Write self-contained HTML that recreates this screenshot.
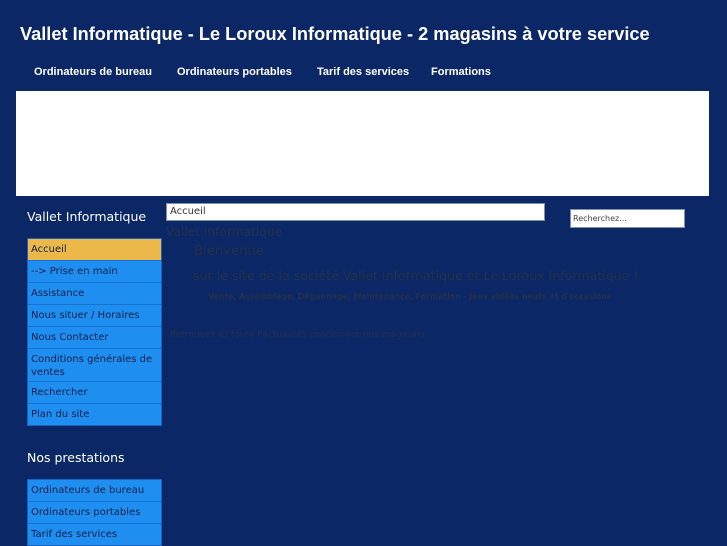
<!DOCTYPE html>
<html><head><meta charset="utf-8"><style>
body{margin:0;width:727px;height:545px;overflow:hidden;background:#0b2766;font-family:"DejaVu Sans",sans-serif;position:relative}
.a{position:absolute}
h1{position:absolute;left:20px;top:24px;margin:0;font:bold 18.2px "Liberation Sans",sans-serif;color:#fff}
.nav{top:66px;font:bold 11px "Liberation Sans",sans-serif;color:#fff}
.ban{left:16px;top:91px;width:693px;height:105px;background:#fff}
.st{color:#fff;font-size:12.5px}
ul{position:absolute;left:27px;width:133px;margin:0;padding:0;list-style:none;border:1px solid #1a60c0;background:#1e8ff0}
li{font-size:10px;color:#10204a;padding:4px 3px 0;height:17px;border-top:1px solid #1672d4;line-height:13px}
li:first-child{border-top:0}
.dk{color:#26304a}
</style></head><body>
<h1>Vallet Informatique - Le Loroux Informatique - 2 magasins à votre service</h1>
<div class="a nav" style="left:34px">Ordinateurs de bureau</div>
<div class="a nav" style="left:177px">Ordinateurs portables</div>
<div class="a nav" style="left:317px">Tarif des services</div>
<div class="a nav" style="left:431px">Formations</div>
<div class="a ban"></div>
<div class="a st" style="left:27px;top:209px">Vallet Informatique</div>
<ul style="top:238px">
<li style="background:#ecb84a">Accueil</li>
<li>--&gt; Prise en main</li>
<li>Assistance</li>
<li>Nous situer / Horaires</li>
<li>Nous Contacter</li>
<li style="height:28px">Conditions générales de ventes</li>
<li>Rechercher</li>
<li>Plan du site</li>
</ul>
<div class="a st" style="left:27px;top:450px">Nos prestations</div>
<ul style="top:479px">
<li>Ordinateurs de bureau</li>
<li>Ordinateurs portables</li>
<li>Tarif des services</li>
</ul>
<div class="a" style="left:166px;top:203px;width:374px;height:16px;background:#fff;border:1px solid #8090b0;font-size:10px;color:#333;line-height:16px;padding-left:3px">Accueil</div>
<div class="a" style="left:570px;top:209px;width:111px;height:17px;background:#fff;border:1px solid #8090b0;font-size:8px;color:#444;line-height:17px;padding-left:2px">Recherchez...</div>
<div class="a dk" style="left:166px;top:225px;font-size:12.2px">Vallet Informatique</div>
<div class="a dk" style="left:194px;top:244px;font-size:13.2px">Bienvenue</div>
<div class="a dk" style="left:193px;top:268px;font-size:12.6px">sur le site de la société Vallet Informatique et Le Loroux Informatique !</div>
<div class="a dk" style="left:208px;top:292px;font-size:7.8px;font-weight:bold">Vente, Assemblage, Dépannage, Maintenance, Formation - Jeux vidéos neufs et d'occasions</div>
<div class="a dk" style="left:170px;top:330px;font-size:9px">Retrouvez ici toute l'actualités concernant nos magasins :</div>
</body></html>
